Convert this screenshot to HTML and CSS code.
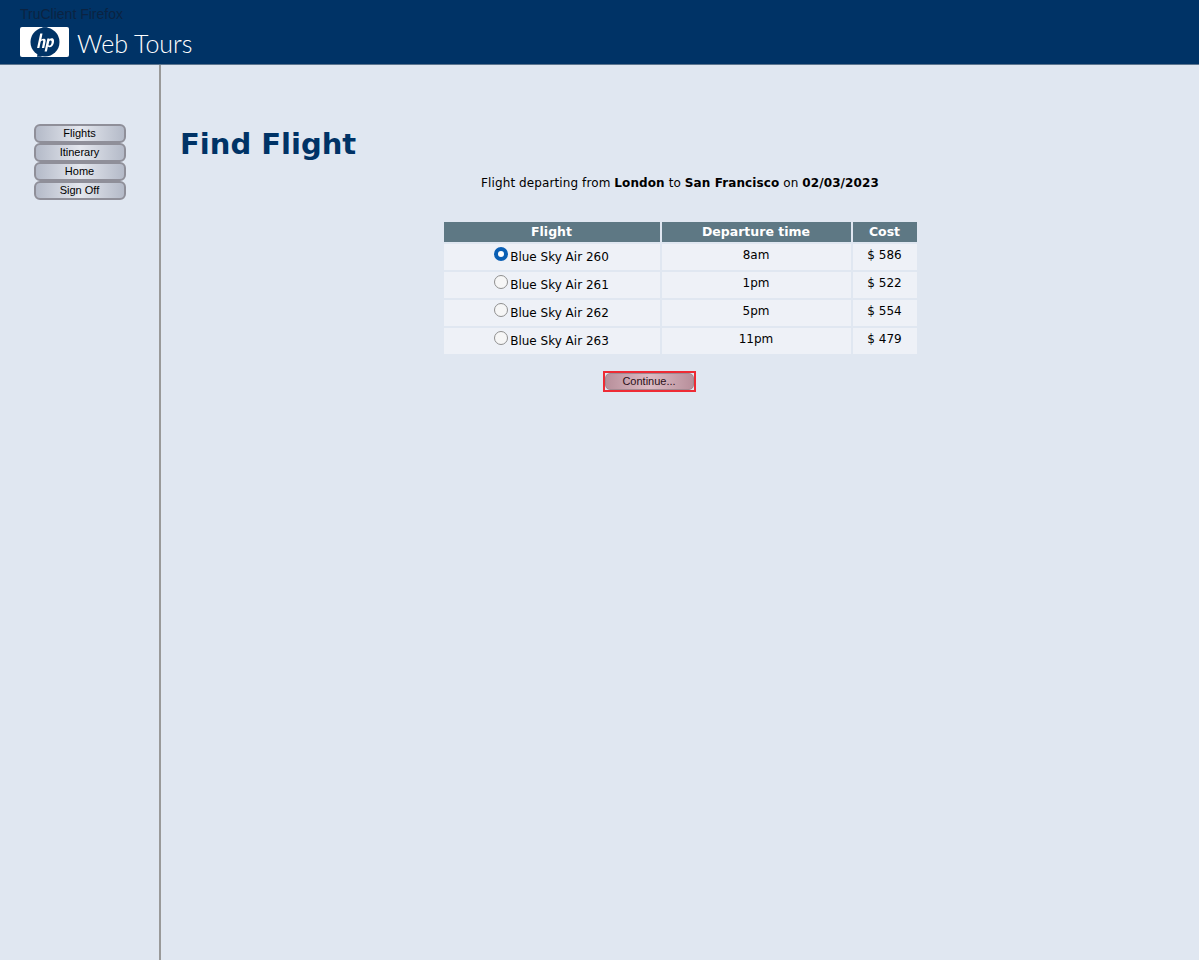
FILE: index.html
```html
<!DOCTYPE html>
<html lang="en">

<head>
    <meta charset="UTF-8">
    <title>Web Tours</title>
    <link rel="stylesheet" href="styles.css">
</head>

<body>

    <div class="header">
        <div class="client">TruClient Firefox</div>
        <div class="brand">
            <div class="logo">
                <svg width="30" height="30" viewBox="0 0 30 30">
                    <circle cx="15" cy="15" r="14.5" fill="#003366"/>
                    <path d="M17.5 0.2 L12.5 0.2 L7 29.8 L11.5 29.8 Z" fill="#003366"/>
                    <path d="M10.2 6.5 h2.3 l-1.2 6.2 c1.2-1.2 3.6-1.4 4.2 0 c0.3 0.7 0.1 1.6 -0.1 2.5 l-1.2 5.8 h-2.3 l1.2-5.9 c0.2-1 0.1-1.6-0.8-1.5 c-1 0.1-1.6 0.9-1.8 1.9 l-1.1 5.5 h-2.3 Z" fill="#fff"/>
                    <path d="M17.4 11.4 h2.2 l-0.2 1 c1.3-1.5 4.4-1.7 4.6 1 c0.2 2.6-1.1 6.6-4.2 6.9 c-0.9 0.1-1.5-0.2-1.9-0.8 l-1 5 h-2.3 Z M19.2 14.6 l-0.7 3.4 c0.4 0.9 2 0.7 2.6-0.8 c0.4-1 0.7-2.3 0.5-3 c-0.3-1-2.1-0.8-2.4 0.4 Z" fill="#fff" fill-rule="evenodd"/>
                </svg>
            </div>
            <div class="title">Web Tours</div>
        </div>
    </div>

    <div class="page">
        <div class="sidebar">
            <a class="nav_btn">Flights</a>
            <a class="nav_btn">Itinerary</a>
            <a class="nav_btn">Home</a>
            <a class="nav_btn">Sign Off</a>
        </div>

        <div class="main">
            <h1>Find Flight</h1>
            <p class="summary">Flight departing from <b>London</b> to <b>San Francisco</b> on <b>02/03/2023</b></p>

            <table class="flights">
                <tr>
                    <th class="col_flight">Flight</th>
                    <th class="col_time">Departure time</th>
                    <th class="col_cost">Cost</th>
                </tr>
                <tr>
                    <td><span class="radio checked"></span>Blue Sky Air 260</td>
                    <td class="raised">8am</td>
                    <td class="raised">$ 586</td>
                </tr>
                <tr>
                    <td><span class="radio"></span>Blue Sky Air 261</td>
                    <td class="raised">1pm</td>
                    <td class="raised">$ 522</td>
                </tr>
                <tr>
                    <td><span class="radio"></span>Blue Sky Air 262</td>
                    <td class="raised">5pm</td>
                    <td class="raised">$ 554</td>
                </tr>
                <tr>
                    <td><span class="radio"></span>Blue Sky Air 263</td>
                    <td class="raised">11pm</td>
                    <td class="raised">$ 479</td>
                </tr>
            </table>

            <div class="actions">
                <div class="continue_wrap">
                    <button class="continue">Continue...</button>
                </div>
            </div>
        </div>
    </div>

</body>

</html>
```

FILE: styles.css
```css
html, body {
    height: 100%;
}
body {
    margin: 0;
    background-color: #e0e7f1;
    font-family: "DejaVu Sans", sans-serif;
    color: #000;
    overflow: hidden;
}

.header {
    height: 65px;
    box-sizing: border-box;
    background-color: #003366;
    border-bottom: 1px solid #5d7690;
    padding: 6px 0 0 20px;
}
.client {
    font-family: "Liberation Sans", sans-serif;
    font-size: 14px;
    line-height: 16px;
    color: #0b2342;
    height: 20px;
}
.brand {
    display: flex;
    align-items: center;
}
.logo {
    width: 49px;
    height: 30px;
    background-color: #fff;
    border-radius: 2px;
    display: flex;
    justify-content: center;
}
.title {
    font-family: "Lato", sans-serif;
    font-weight: 300;
    font-size: 25px;
    line-height: 30px;
    color: #fff;
    margin: 2px 0 0 8px;
}

.page {
    display: flex;
    height: 895px;
}
.sidebar {
    width: 159px;
    flex: none;
    border-right: 2px solid #999;
    padding-top: 59px;
    display: flex;
    flex-direction: column;
    align-items: center;
}
.nav_btn {
    width: 92px;
    height: 19px;
    box-sizing: border-box;
    border: 2px solid #8f8f99;
    border-radius: 6px;
    background: linear-gradient(to right, #b4bac8, #e4e7ee 50%, #b4bac8);
    font-family: "Liberation Sans", sans-serif;
    font-size: 11px;
    line-height: 15px;
    text-align: center;
    color: #000;
}

.main {
    flex: 1;
    padding-top: 59px;
}
h1 {
    margin: 0 0 0 19px;
    font-size: 29px;
    line-height: 40px;
    font-weight: bold;
    color: #003366;
}
.summary {
    margin: 10px 0 0 0;
    font-size: 12px;
    line-height: 18px;
    text-align: center;
    letter-spacing: 0.1px;
}

.flights {
    margin: 28px auto 0 auto;
    border-collapse: separate;
    border-spacing: 2px;
    font-size: 12px;
    table-layout: fixed;
    width: 477px;
}
.flights th {
    height: 18px;
    padding: 0;
    background-color: #5e7884;
    color: #fff;
    font-size: 12.5px;
    line-height: 20px;
    vertical-align: top;
}
.col_flight {
    width: 216px;
}
.col_time {
    width: 189px;
}
.col_cost {
    width: 64px;
}
.flights td {
    height: 21px;
    padding: 0;
    background-color: #eef1f7;
    text-align: center;
    vertical-align: top;
    line-height: 26px;
}
.flights td.raised {
    line-height: 22px;
}
.radio {
    display: inline-block;
    width: 14px;
    height: 14px;
    box-sizing: border-box;
    margin: 0 2px 0 0;
    border: 1px solid #8f8f8f;
    border-radius: 50%;
    background-color: #f6f6f6;
    vertical-align: 0;
}
.radio.checked {
    border: 4px solid #0a5fb4;
    background-color: #fff;
}

.actions {
    display: flex;
    justify-content: center;
    margin-top: 15px;
}
.continue_wrap {
    margin-right: 62px;
    border: 2px solid #ee2b35;
    width: 93px;
    height: 21px;
    box-sizing: border-box;
}
.continue {
    display: block;
    width: 100%;
    height: 100%;
    padding: 0 0 2px 0;
    border: 1px solid #a08a92;
    border-radius: 5px;
    background: linear-gradient(to right, #b88f9b, #dcbcc4 50%, #b88f9b);
    font-family: "Liberation Sans", sans-serif;
    font-size: 11px;
    color: #2a1018;
}
```
